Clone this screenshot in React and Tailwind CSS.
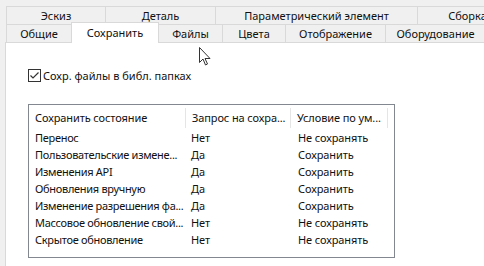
import React from "react";

const topTabs = [
  { label: "Эскиз", w: "w-[99px]" },
  { label: "Деталь", w: "w-[110px]" },
  { label: "Параметрический элемент", w: "w-[202px]" },
  { label: "Сборка", w: "w-[100px]" },
];

const rows = [
  ["Перенос", "Нет", "Не сохранять"],
  ["Пользовательские измене...", "Да", "Сохранить"],
  ["Изменения API", "Да", "Сохранить"],
  ["Обновления вручную", "Да", "Сохранить"],
  ["Изменение разрешения фа...", "Да", "Сохранить"],
  ["Массовое обновление свой...", "Нет", "Не сохранять"],
  ["Скрытое обновление", "Нет", "Не сохранять"],
];

export default function App() {
  return (
    <div
      className="relative w-[484px] h-[266px] overflow-hidden bg-[#f0f0f0] text-[11px] text-[#111] pt-[6px] pl-[5px]"
      style={{ fontFamily: "'Noto Sans', 'DejaVu Sans', sans-serif" }}
    >
      {/* top tab row */}
      <div className="flex h-[18px] pl-[1px]">
        {topTabs.map((t) => (
          <div
            key={t.label}
            className={`${t.w} shrink-0 flex items-center justify-center border-t border-l border-[#d9d9d9] bg-[#f0f0f0] leading-[17px] whitespace-nowrap`}
          >
            {t.label}
          </div>
        ))}
      </div>

      {/* bottom tab row */}
      <div className="flex h-[18px] pl-[1px] relative z-10">
        <div className="w-[65px] shrink-0 flex items-center justify-center border-t border-l border-[#d9d9d9] leading-[17px]">
          Общие
        </div>
        <div className="w-[88px] shrink-0 -mt-[2px] h-[21px] flex items-center justify-center bg-white border-t border-l border-r border-[#d9d9d9] leading-[17px] pb-[2px]">
          Сохранить
        </div>
        <div className="w-[63px] shrink-0 flex items-center justify-center border-t border-[#d9d9d9] leading-[17px]">
          Файлы
        </div>
        <div className="w-[63px] shrink-0 flex items-center justify-center border-t border-l border-[#d9d9d9] leading-[17px]">
          Цвета
        </div>
        <div className="w-[100px] shrink-0 flex items-center justify-center border-t border-l border-[#d9d9d9] leading-[17px]">
          Отображение
        </div>
        <div className="w-[100px] shrink-0 flex items-center justify-center border-t border-l border-[#d9d9d9] leading-[17px]">
          Оборудование
        </div>
      </div>

      {/* panel */}
      <div className="bg-white border-t border-l border-[#d9d9d9] h-[230px] pl-[22px] pt-[26px]">
        <label className="flex items-center gap-[2px] h-[13px] leading-[15px]">
          <span className="w-[13px] h-[13px] border border-[#333] bg-white flex items-center justify-center">
            <svg width="11" height="11" viewBox="0 0 11 11">
              <path d="M1.5 5.5 L4 8 L9.5 2.5" fill="none" stroke="#333" strokeWidth="1.2" />
            </svg>
          </span>
          <span>Сохр. файлы в библ. папках</span>
        </label>

        <div className="mt-[22px] w-[367px] h-[154px] border border-[#828790] bg-white tracking-[-0.1px]">
          <div className="flex h-[20px] mt-[3px] items-center leading-[20px]">
            <div className="w-[157px] pl-[6px] border-r border-[#e5e5e5] h-full overflow-hidden whitespace-nowrap">
              Сохранить состояние
            </div>
            <div className="w-[105px] pl-[6px] border-r border-[#e5e5e5] h-full overflow-hidden whitespace-nowrap">
              Запрос на сохра...
            </div>
            <div className="w-[97px] pl-[6px] border-r border-[#e5e5e5] h-full overflow-hidden whitespace-nowrap">
              Условие по ум...
            </div>
          </div>
          <div className="mt-[1px]">
            {rows.map((r) => (
              <div key={r[0]} className="flex h-[17px] leading-[17px] whitespace-nowrap">
                <div className="w-[157px] pl-[6px] pr-[2px] tracking-[-0.3px]">{r[0]}</div>
                <div className="w-[105px] pl-[5px]">{r[1]}</div>
                <div className="w-[97px] pl-[7px]">{r[2]}</div>
              </div>
            ))}
          </div>
        </div>
      </div>

      {/* mouse pointer */}
      <svg className="absolute left-[199px] top-[47px]" width="14" height="20" viewBox="0 0 14 20">
        <path d="M0.5 0.5 L0.5 15.5 L4 12 L6.5 18 L8.5 17 L6 11.5 L11 11.5 Z" fill="white" stroke="#333" strokeWidth="1" />
      </svg>
    </div>
  );
}
